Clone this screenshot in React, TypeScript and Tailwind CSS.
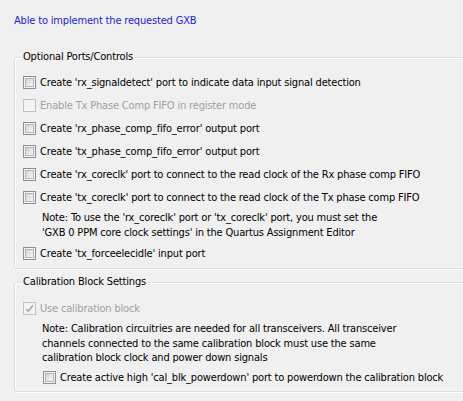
type CbProps = { disabled?: boolean; checked?: boolean };

function Checkbox({ disabled, checked }: CbProps) {
  if (disabled) {
    return (
      <div className="w-[13px] h-[13px] shrink-0 border border-[#c2c2c2] bg-[#f4f4f4] flex items-center justify-center">
        {checked && (
          <svg width="9" height="9" viewBox="0 0 9 9">
            <path d="M1 5 L3.3 7.3 L8 1.2" fill="none" stroke="#a8a8a8" strokeWidth="1.5" />
          </svg>
        )}
      </div>
    );
  }
  return (
    <div className="w-[13px] h-[13px] shrink-0 border border-[#8e8f8f] bg-[#f4f4f4] p-[1px]">
      <div className="w-full h-full border border-[#b3b6ba] bg-gradient-to-br from-[#d0d3d7] to-[#f7f7f7]" />
    </div>
  );
}

function Row({ children, disabled, checked, className = "" }: { children: React.ReactNode; disabled?: boolean; checked?: boolean; className?: string }) {
  return (
    <div className={"flex items-center h-[23px] gap-[4px] " + className}>
      <Checkbox disabled={disabled} checked={checked} />
      <span className={disabled ? "text-[#a0a0a0]" : "text-black"}>{children}</span>
    </div>
  );
}

function Group({ title, children, className = "" }: { title: string; children: React.ReactNode; className?: string }) {
  return (
    <div className={"relative ml-[14px] w-[452px] border border-[#d5dfe5] rounded-[3px] shadow-[inset_1px_1px_0_#ffffff,1px_1px_0_#ffffff] " + className}>
      <div className="absolute left-[6px] top-[-8px] px-[2px] bg-[#f0f0f0] leading-[14px] text-black">{title}</div>
      {children}
    </div>
  );
}

export default function App() {
  return (
    <div
      className="bg-[#f0f0f0] w-[463px] h-[401px] overflow-hidden text-[11px] tracking-[-0.17px] leading-[15px]"
      style={{ fontFamily: "'DejaVu Sans Condensed', 'DejaVu Sans', sans-serif" }}
    >
      <div className="pt-[14px] pl-[14px] text-[#1c1cd4] leading-[14px]">Able to implement the requested GXB</div>
      <Group title="Optional Ports/Controls" className="mt-[29px] pt-[13px] pb-[3px] pl-[8px]">
        <Row>Create 'rx_signaldetect' port to indicate data input signal detection</Row>
        <Row disabled>Enable Tx Phase Comp FIFO in register mode</Row>
        <Row>Create 'rx_phase_comp_fifo_error' output port</Row>
        <Row>Create 'tx_phase_comp_fifo_error' output port</Row>
        <Row>Create 'rx_coreclk' port to connect to the read clock of the Rx phase comp FIFO</Row>
        <Row>Create 'tx_coreclk' port to connect to the read clock of the Tx phase comp FIFO</Row>
        <div className="pl-[19px] mt-[1px] mb-[2px]">
          <div>Note: To use the 'rx_coreclk' port or 'tx_coreclk' port, you must set the</div>
          <div>'GXB 0 PPM core clock settings' in the Quartus Assignment Editor</div>
        </div>
        <Row>Create 'tx_forceelecidle' input port</Row>
      </Group>
      <Group title="Calibration Block Settings" className="mt-[13px] pt-[14px] pb-[2px] pl-[8px]">
        <Row disabled checked>Use calibration block</Row>
        <div className="pl-[19px] mt-[2px] leading-[14.5px]">
          <div>Note: Calibration circuitries are needed for all transceivers. All transceiver</div>
          <div>channels connected to the same calibration block must use the same</div>
          <div>calibration block clock and power down signals</div>
        </div>
        <Row className="pl-[20px]">Create active high 'cal_blk_powerdown' port to powerdown the calibration block</Row>
      </Group>
    </div>
  );
}
